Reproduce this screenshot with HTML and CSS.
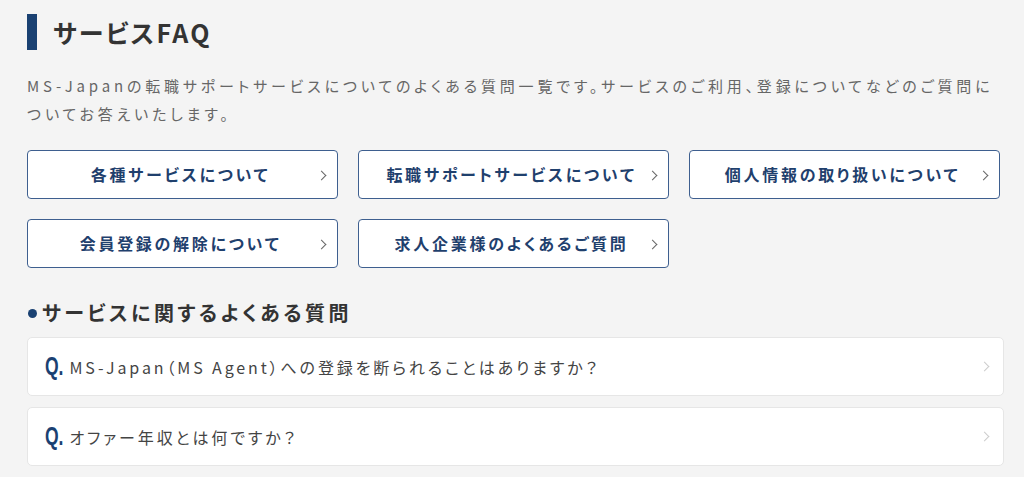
FILE: index.html
```html
<!DOCTYPE html>
<html lang="ja">
<head>
  <meta charset="utf-8">
  <title>サービスFAQ</title>
  <link rel="stylesheet" href="styles.css">
</head>
<body>
  <div class="wrap">
    <h1 class="ttl">サービスFAQ</h1>
    <p class="lead">MS-Japanの転職サポートサービスについてのよくある質問一覧です。サービスのご利用、登録についてなどのご質問についてお答えいたします。</p>

    <ul class="cat">
      <li><a href="#">各種サービスについて</a></li>
      <li><a href="#">転職サポートサービスについて</a></li>
      <li><a href="#">個人情報の取り扱いについて</a></li>
      <li><a href="#">会員登録の解除について</a></li>
      <li><a href="#">求人企業様のよくあるご質問</a></li>
    </ul>

    <h2 class="sub">サービスに関するよくある質問</h2>
    <ul class="faq">
      <li><a href="#"><span class="q">Q.</span>MS-Japan（MS Agent）への登録を断られることはありますか？</a></li>
      <li><a href="#"><span class="q">Q.</span>オファー年収とは何ですか？</a></li>
    </ul>
  </div>
</body>
</html>
```

FILE: styles.css
```css
body {
  margin: 0;
  padding: 0;
  background: #f4f4f4;
  font-family: "Noto Sans CJK JP", "Noto Sans", sans-serif;
  font-feature-settings: "palt";
  color: #333;
}
ul { list-style: none; margin: 0; padding: 0; }
a { text-decoration: none; }

.wrap {
  width: 977px;
  padding: 14px 0 0 27px;
}

.ttl {
  margin: 0;
  height: 36px;
  line-height: 36px;
  border-left: 10px solid #1a4172;
  padding-left: 16px;
  font-size: 25px;
  font-weight: 700;
  color: #333;
  letter-spacing: 0.09em;
}

.lead {
  margin: 22px 0 0;
  font-size: 15px;
  line-height: 28px;
  color: #666;
  letter-spacing: 0.255em;
}

.cat {
  margin-top: 22px;
  display: grid;
  grid-template-columns: repeat(3, 311px);
  column-gap: 20px;
  row-gap: 20px;
}
.cat a {
  position: relative;
  display: block;
  height: 47px;
  line-height: 47px;
  background: #fff;
  border: 1px solid #3e5f8f;
  border-radius: 4px;
  text-align: center;
  font-size: 16px;
  font-weight: 700;
  color: #1f406d;
  letter-spacing: 0.17em;
  padding-right: 4px;
}
.cat a::after {
  content: "";
  position: absolute;
  right: 12px;
  top: 21px;
  width: 6px;
  height: 6px;
  border-top: 1px solid #666;
  border-right: 1px solid #666;
  transform: rotate(45deg);
}

.sub {
  margin: 31px 0 0;
  font-size: 20px;
  font-weight: 700;
  line-height: 28px;
  color: #333;
  letter-spacing: 0.17em;
  display: flex;
  align-items: center;
}
.sub::before {
  content: "";
  width: 9px;
  height: 9px;
  border-radius: 50%;
  background: #1a4172;
  margin: 0 5px 0 1px;
}

.faq { margin-top: 10px; }
.faq li { margin-bottom: 11px; }
.faq a {
  position: relative;
  display: flex;
  align-items: center;
  height: 57px;
  background: #fff;
  border: 1px solid #e6e6e6;
  border-radius: 5px;
  padding-left: 17px;
  font-size: 16px;
  color: #444;
  letter-spacing: 0.18em;
}
.faq a::after {
  content: "";
  position: absolute;
  right: 15px;
  top: 25px;
  width: 6px;
  height: 6px;
  border-top: 1px solid #ccc;
  border-right: 1px solid #ccc;
  transform: rotate(45deg);
}
.q {
  display: inline-block;
  font-family: "Liberation Sans", sans-serif;
  font-weight: 700;
  font-size: 25px;
  color: #1a4172;
  letter-spacing: 0;
  transform: scaleX(0.7);
  transform-origin: left center;
  margin-right: -2px;
}
```
